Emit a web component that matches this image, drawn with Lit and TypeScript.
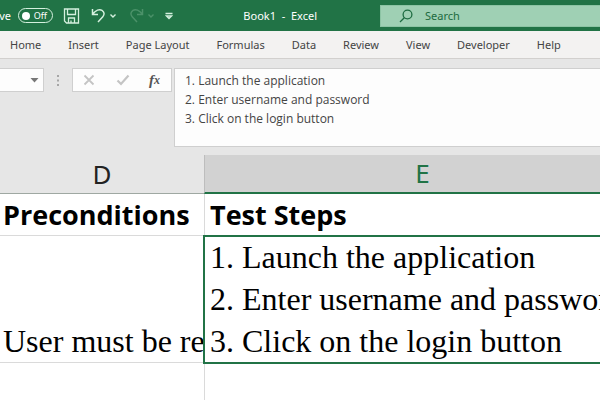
import { LitElement, html, css, svg } from "lit";
import { customElement, state } from "lit/decorators.js";

const TABS = ["Home", "Insert", "Page Layout", "Formulas", "Data", "Review", "View", "Developer", "Help"];
const STEPS = ["1. Launch the application", "2. Enter username and password", "3. Click on the login button"];

const undoPath = svg`<path d="M1.5 1v5.500H7M1.800 6.200C4.500 2 8.500 .8 11 2.300c2.600 1.700 2.600 4.500.8 6.500L7 14" />`;
const redoPath = svg`<path d="M13.500 1v5.500H8M13.200 6.200C10.500 2 6.500 .8 4 2.300c-2.600 1.700-2.600 4.500-.8 6.500L8 14" />`;

@customElement("title-bar")
class TitleBar extends LitElement {
  @state() autoSave = false;

  static styles = css`
    :host { display: flex; align-items: center; height: 31px; background: #217346; color: #fff; font: 11px "Noto Sans", "Open Sans", sans-serif; }
    button { display: flex; align-items: center; justify-content: center; padding: 0; border: 0; background: none; color: #d4f0de; }
    button:disabled { color: #4b9169; }
    .auto { display: flex; align-items: center; gap: 7px; width: 53px; justify-content: flex-end; flex: none; }
    .toggle { position: relative; display: flex; flex: none; align-items: center; box-sizing: border-box; width: 35px; height: 15px; padding: 0 5px 0 3px; justify-content: space-between; border: 1px solid #d4f0de; border-radius: 8px; font-size: 9px; }
    .toggle input { position: absolute; inset: 0; margin: 0; opacity: 0; }
    .knob { flex: none; width: 8px; height: 8px; border-radius: 50%; background: #fff; }
    .tools { display: flex; align-items: center; flex: none; padding-left: 10px; width: 317px; box-sizing: border-box; }
    .save { width: 17px; }
    .undo { margin-left: 10px; width: 16px; }
    .redo { margin-left: 10px; width: 16px; }
    .arrow { margin-left: 2px; width: 10px; }
    .more { margin-left: 8px; width: 10px; }
    h1 { margin: 0 0 0 auto; padding-right: 53px; font-size: 11px; font-weight: 400; white-space: pre; }
    .search { display: flex; align-items: center; gap: 12px; flex: 1; min-width: 0; box-sizing: border-box; height: 22px; margin-left: 10px; padding-left: 18px; background: #9fd0b4; border: 1px solid #8cc4a4; border-right: 0; color: #1d6b40; }
    .search input { flex: 1; min-width: 0; padding: 0; border: 0; outline: 0; background: none; color: #1d6b40; font: inherit; }
    .search input::placeholder { color: #1d6b40; opacity: 1; }
    svg { display: block; fill: none; stroke: currentColor; flex: none; }
  `;

  render() {
    const chevron = html`<svg width="8" height="6" viewBox="0 0 8 6" stroke-width="1.4"><path d="M1.5 1.5 4 4l2.500-2.500" /></svg>`;
    return html`
      <label class="auto">
        <span>AutoSave</span>
        <span class="toggle">
          <input type="checkbox" .checked=${this.autoSave} @change=${() => (this.autoSave = !this.autoSave)} />
          <span class="knob"></span>${this.autoSave ? "On" : "Off"}
        </span>
      </label>
      <div class="tools">
        <button class="save" aria-label="Save">
          <svg width="17" height="16" viewBox="0 0 17 16" stroke-width="1.3"><path d="M1.500 1h14v14H3.500l-2-2zM4.500 1v5.500h8V1M5.500 15v-5h6v5M8 12.500V15" /></svg>
        </button>
        <button class="undo" aria-label="Undo"><svg width="15" height="15" viewBox="0 0 15 15" stroke-width="1.5">${undoPath}</svg></button>
        <button class="arrow" aria-label="Undo list">${chevron}</button>
        <button class="redo" aria-label="Redo" disabled><svg width="15" height="15" viewBox="0 0 15 15" stroke-width="1.5">${redoPath}</svg></button>
        <button class="arrow" aria-label="Redo list" disabled>${chevron}</button>
        <button class="more" aria-label="Customize toolbar">
          <svg width="8" height="8" viewBox="0 0 8 8" stroke-width="1.3"><path d="M.5 1.500h7M1.500 4 4 6.500 6.500 4z" /></svg>
        </button>
        <h1>Book1  -  Excel</h1>
      </div>
      <label class="search">
        <svg width="14" height="14" viewBox="0 0 14 14" stroke-width="1.3"><circle cx="8.500" cy="5.500" r="4.400" /><path d="M5.300 8.700 1 13" /></svg>
        <input type="search" placeholder="Search" aria-label="Search" />
      </label>
    `;
  }
}

@customElement("ribbon-tabs")
class RibbonTabs extends LitElement {
  static styles = css`
    :host { display: block; background: #f3f2f1; border-bottom: 1px solid #d2d0ce; }
    nav { display: flex; gap: 27px; height: 27px; padding-left: 10px; }
    button { flex: none; padding: 0; border: 0; background: none; color: #444; font: 11px "Noto Sans", "Open Sans", sans-serif; }
  `;
  render() {
    return html`<nav>${TABS.map((t) => html`<button>${t}</button>`)}</nav>`;
  }
}

@customElement("formula-bar")
class FormulaBar extends LitElement {
  static styles = css`
    :host { display: flex; align-items: flex-start; padding: 9px 0 8px; background: #e6e6e6; }
    button { display: flex; align-items: center; justify-content: center; padding: 0; border: 0; background: none; color: #777; }
    button:disabled { color: #c4c4c4; }
    .name, .actions { display: flex; align-items: center; box-sizing: border-box; height: 24px; background: #fdfdfd; border: 1px solid #cfcfcf; flex: none; }
    .name { width: 44px; border-left: 0; justify-content: flex-end; padding-right: 4px; }
    .grip { width: 28px; height: 24px; display: flex; align-items: center; justify-content: center; color: #a6a6a6; flex: none; }
    .actions { width: 100px; justify-content: space-between; padding: 0 11px 0 9px; }
    .actions .fx { color: #555; font: italic bold 15px "Liberation Serif", serif; }
    .fx sub { font-size: 12px; vertical-align: baseline; }
    textarea { flex: 1; min-width: 0; box-sizing: border-box; height: 79px; margin-left: 2px; padding: 2px 10px; border: 1px solid #cfcfcf; border-right: 0; border-radius: 0; outline: 0; resize: none; overflow: hidden; background: #fdfdfd; color: #444; font: 12px/19px "Open Sans", sans-serif; }
    svg { display: block; fill: none; stroke: currentColor; }
  `;
  render() {
    return html`
      <div class="name">
        <button aria-label="Name box list"><svg width="9" height="5" viewBox="0 0 9 5"><path fill="currentColor" stroke="none" d="M.5 0h8l-4 4.500z" /></svg></button>
      </div>
      <div class="grip"><svg width="2" height="11" viewBox="0 0 2 11" stroke-width="2"><path d="M1 0v2M1 4.500v2M1 9v2" /></svg></div>
      <div class="actions">
        <button disabled aria-label="Cancel"><svg width="14" height="12" viewBox="0 0 14 12" stroke-width="1.8"><path d="M2.500 1.500l9 9M11.500 1.500l-9 9" /></svg></button>
        <button disabled aria-label="Enter"><svg width="14" height="12" viewBox="0 0 14 12" stroke-width="2.2"><path d="M1.500 6.500 5 10l7.500-8.500" /></svg></button>
        <button class="fx" aria-label="Insert function">f<sub>x</sub></button>
      </div>
      <textarea aria-label="Formula" spellcheck="false" .value=${STEPS.join("\n")}></textarea>
    `;
  }
}

@customElement("sheet-grid")
class SheetGrid extends LitElement {
  static styles = css`
    :host { display: block; overflow: hidden; background: #fff; color: #000; }
    table { table-layout: fixed; width: 640px; border-spacing: 0; }
    .d { width: 204px; }
    th, td { box-sizing: border-box; padding: 0; border: 0 solid #dadada; text-align: left; white-space: nowrap; }
    th { height: 39px; background: #e6e6e6; border-bottom: 1px solid #9fa8a2; font: 26px/37px "Noto Sans", sans-serif; text-align: center; color: #222; }
    th.active { background: #d2d2d2; border-left: 1px solid #bdbdbd; border-bottom: 2px solid #217346; color: #217346; }
    td { border-bottom-width: 1px; padding-left: 3px; }
    td + td { border-left-width: 1px; padding-left: 5px; }
    .title td { height: 42px; font: bold 27px/41px "Open Sans", sans-serif; }
    .data td { height: 127px; vertical-align: bottom; font: 32px/42px "Liberation Serif", serif; }
    .data .selected { outline: 2px solid #217346; outline-offset: -1px; }
    .blank td { height: 60px; }
  `;
  render() {
    return html`
      <table>
        <colgroup><col class="d" /><col /></colgroup>
        <thead><tr><th scope="col">D</th><th scope="col" class="active">E</th></tr></thead>
        <tbody>
          <tr class="title"><td>Preconditions</td><td>Test Steps</td></tr>
          <tr class="data"><td>User must be re</td><td class="selected">${STEPS.map((s) => html`<div>${s}</div>`)}</td></tr>
          <tr class="blank"><td></td><td></td></tr>
        </tbody>
      </table>
    `;
  }
}

@customElement("app-root")
class AppRoot extends LitElement {
  static styles = css`
    :host { display: flex; flex-direction: column; height: 100vh; overflow: hidden; background: #fff; }
    title-bar, ribbon-tabs, formula-bar { flex: none; }
    sheet-grid { flex: 1; min-height: 0; }
  `;
  render() {
    return html`<title-bar></title-bar><ribbon-tabs></ribbon-tabs><formula-bar></formula-bar><sheet-grid></sheet-grid>`;
  }
}
